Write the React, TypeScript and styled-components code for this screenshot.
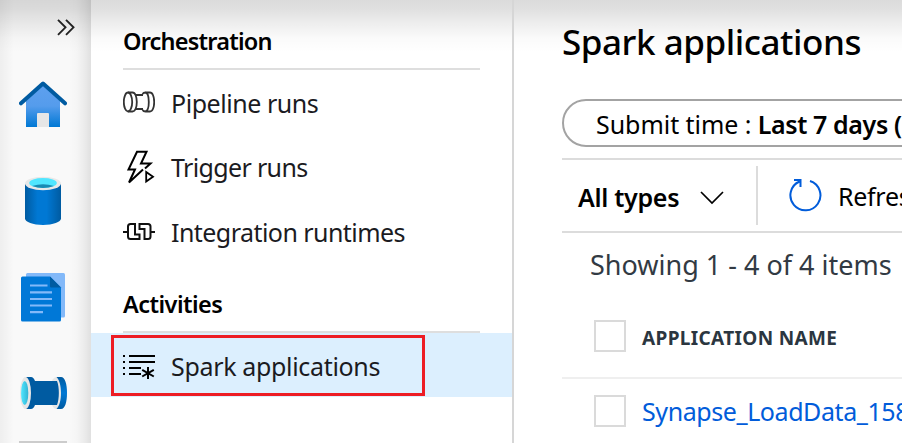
import React from 'react';
import styled, { createGlobalStyle } from 'styled-components';

const Global = createGlobalStyle`
  * { box-sizing: border-box; }
  html, body { margin: 0; overflow: hidden; background: #fff; }
  body { font-family: "Noto Sans", "Open Sans", sans-serif; color: #000; }
  svg { display: block; flex: none; }
`;

const topShade = 'linear-gradient(to bottom, rgba(0,0,0,.14) 0, rgba(0,0,0,.125) 8px, rgba(0,0,0,.065) 24px, rgba(0,0,0,.02) 38px, rgba(0,0,0,0) 52px)';

const Shell = styled.div`
  display: grid;
  grid-template-columns: 91px 423px 1fr;
  width: 902px;
  height: 443px;
  overflow: hidden;
`;

const Rail = styled.nav`
  display: flex;
  flex-direction: column;
  align-items: flex-start;
  padding: 18px 0 0 19px;
  background:
    linear-gradient(to left, rgba(0,0,0,.1) 0, rgba(0,0,0,.06) 6px, rgba(0,0,0,.015) 14px, rgba(0,0,0,0) 22px),
    linear-gradient(to right, rgba(0,0,0,.045) 0, rgba(0,0,0,0) 14px),
    ${topShade},
    #f9f9f9;
`;

const RailItem = styled.div<{ $gap: number; $indent?: number }>`
  margin-top: ${p => p.$gap}px;
  margin-left: ${p => p.$indent ?? 0}px;
`;

const RailRule = styled.div`
  width: 48px;
  height: 3px;
  margin-top: 32px;
  flex: none;
  background: #ccc;
`;

const Nav = styled.aside`
  border-right: 2px solid #d6d6d6;
  background: ${topShade}, #fff;
`;

const NavHeading = styled.h2<{ $height: number; $spacing: number }>`
  display: flex;
  align-items: flex-end;
  height: ${p => p.$height}px;
  margin: 0 32px 0 32px;
  padding-bottom: 10px;
  border-bottom: 2px solid #dedede;
  font-size: 23.500px;
  line-height: 34px;
  font-weight: 600;
  letter-spacing: ${p => p.$spacing}px;
`;

const NavRow = styled.div<{ $selected?: boolean; $height?: number }>`
  position: relative;
  display: flex;
  align-items: center;
  height: ${p => p.$height ?? 64}px;
  padding-left: 32px;
  background: ${p => (p.$selected ? '#dceffe' : 'transparent')};
`;

const NavLabel = styled.span<{ $spacing: number }>`
  margin-left: 16px;
  padding-top: 1px;
  font-size: 25px;
  line-height: 34px;
  color: #1b1b1f;
  white-space: nowrap;
  letter-spacing: ${p => p.$spacing}px;
`;

const Highlight = styled.div`
  position: absolute;
  left: 20px;
  top: 2px;
  width: 314px;
  height: 61px;
  border: 3px solid #ed1c24;
`;

const Main = styled.main`
  min-width: 0;
  overflow: hidden;
  padding-left: 48px;
  white-space: nowrap;
  background: ${topShade}, #fff;
`;

const Title = styled.h1`
  margin: 0;
  height: 99px;
  padding-top: 17px;
  font-size: 35px;
  line-height: 50px;
  font-weight: 500;
  letter-spacing: -0.45px;
`;

const Pill = styled.div`
  display: flex;
  align-items: center;
  width: 480px;
  height: 48px;
  padding: 1px 0 0 32px;
  border: 2px solid #a3a3a3;
  border-radius: 24px;
  font-size: 25px;
  line-height: 34px;
  white-space: pre;
`;

const PillName = styled.span`
  letter-spacing: -0.05px;
`;

const PillValue = styled.b`
  font-weight: 600;
  letter-spacing: -0.4px;
`;

const Toolbar = styled.div`
  display: flex;
  align-items: center;
  height: 75px;
  margin-top: 11px;
  border-top: 2px solid #dcdcdc;
  border-bottom: 2px solid #dcdcdc;
`;

const TypeFilter = styled.div`
  display: flex;
  flex: none;
  align-items: center;
  width: 196px;
  height: 59px;
  padding-left: 16px;
  border-right: 2px solid #dcdcdc;
  font-size: 25px;
  font-weight: 600;
  svg { margin: 5px 0 0 20px; }
`;

const FilterText = styled.span`
  width: 102px;
  padding-top: 2px;
  letter-spacing: -0.3px;
`;

const Refresh = styled.div`
  display: flex;
  flex: none;
  align-items: center;
  padding-left: 31px;
  font-size: 25px;
`;

const RefreshText = styled.span`
  padding: 1px 0 0 16px;
  letter-spacing: -0.3px;
`;

const Count = styled.div`
  height: 75px;
  padding: 13px 0 0 28px;
  font-size: 27px;
  line-height: 38px;
  color: #323a43;
`;

const TableRow = styled.div<{ $header?: boolean }>`
  display: flex;
  align-items: flex-start;
  height: ${p => (p.$header ? 71 : 73)}px;
  padding: ${p => (p.$header ? 12 : 16)}px 0 0 32px;
  border-bottom: 2px solid #efefef;
`;

const Checkbox = styled.div`
  flex: none;
  width: 32px;
  height: 32px;
  border: 2px solid #dadada;
  background: #fff;
`;

const ColumnName = styled.span`
  padding: 3px 0 0 16px;
  font-size: 19px;
  line-height: 30px;
  font-weight: 700;
  color: #2b3640;
  letter-spacing: 0.35px;
`;

const AppLink = styled.a`
  padding: 0 0 0 16px;
  font-size: 25px;
  line-height: 33px;
  color: #015cda;
  letter-spacing: -0.42px;
`;

const ExpandIcon = () => (
  <svg width="20" height="18" viewBox="0 0 20 18" fill="none" stroke="#222" strokeWidth="1.900">
    <path d="M2 1.800 9.500 9.300 2 16.800M10 1.800 17.500 9.300 10 16.800" />
  </svg>
);

const HomeIcon = () => (
  <svg width="48" height="48" viewBox="0 0 48 48">
    <defs>
      <linearGradient id="home" x1="0" y1="0" x2="0" y2="1">
        <stop offset="0" stopColor="#5ea0ef" />
        <stop offset=".5" stopColor="#559cec" />
        <stop offset="1" stopColor="#0078d4" />
      </linearGradient>
    </defs>
    <path d="M24 4 41 20V45.500q0 .5-.5.5h-33q-.5 0-.5-.5V20z" fill="url(#home)" />
    <path d="M18 46V33q0-1 1-1h10q1 0 1 1v13z" fill="#e6e6e6" />
    <path d="M2 22.300 24 2.600 46 22.300" fill="none" stroke="#005ba1" strokeWidth="4" strokeLinejoin="round" strokeLinecap="round" />
  </svg>
);

const DataIcon = () => (
  <svg width="36" height="50" viewBox="0 0 36 50">
    <defs>
      <linearGradient id="drum">
        <stop offset="0" stopColor="#005ba1" />
        <stop offset=".35" stopColor="#0078d4" />
        <stop offset=".6" stopColor="#0078d4" />
        <stop offset="1" stopColor="#005ba1" />
      </linearGradient>
    </defs>
    <path d="M0 8h36v34.500c0 3.500-8 6.500-18 6.500s-18-3-18-6.500z" fill="url(#drum)" />
    <ellipse cx="18" cy="7.500" rx="18" ry="6.700" fill="#e8e8e8" />
    <ellipse cx="18" cy="7" rx="13.800" ry="5" fill="#50e6ff" />
    <path d="M7 10q11-3.500 22 0-11 4.200-22 0z" fill="#198ab3" />
  </svg>
);

const DocsIcon = () => (
  <svg width="44" height="49" viewBox="0 0 44 49">
    <rect x="5" y="0" width="39" height="44.500" rx="1.500" fill="#83b9f9" />
    <path d="M1.500 3.500H29L40 14.500V47q0 1.500-1.500 1.500h-37Q0 48.500 0 47V5q0-1.500 1.500-1.500z" fill="#0078d7" />
    <path d="M29 3.500 40 14.500H30q-1 0-1-1z" fill="#005ba1" />
    <path d="M9 12.500h17.500M9 19.300h22M9 26h22M9 32.500h22M9 39.200h13" stroke="#83b9f9" strokeWidth="2.200" />
  </svg>
);

const PipeIcon = () => (
  <svg width="48" height="32" viewBox="0 0 48 32">
    <defs>
      <linearGradient id="flange" x1="0" y1="0" x2="0" y2="1">
        <stop offset="0" stopColor="#005ba1" />
        <stop offset=".5" stopColor="#0078d4" />
        <stop offset="1" stopColor="#005ba1" />
      </linearGradient>
      <linearGradient id="bore">
        <stop offset="0" stopColor="#50e6ff" />
        <stop offset="1" stopColor="#32b4d4" />
      </linearGradient>
    </defs>
    <path d="M33 4q1.500-4 5-4 4.500 3 4.500 16T38 32q-3.500 0-5-4z" fill="#e6e6e6" />
    <path d="M37.500 0H42c4 0 6 7 6 16s-2 16-6 16h-4.500c3-3 4.500-9 4.500-16s-1.500-13-4.500-16z" fill="url(#flange)" />
    <path d="M7 0h5q2.500 0 4 4h22c2.500 6 2.500 18 0 24H16q-1.500 4-4 4H7z" fill="#005ba1" />
    <ellipse cx="6.500" cy="16" rx="5.500" ry="16" fill="#e6e6e6" />
    <ellipse cx="5.700" cy="16" rx="3.600" ry="12" fill="url(#bore)" />
  </svg>
);

const PipelineRunsIcon = () => (
  <svg width="32" height="24" viewBox="0 0 32 24" fill="none" stroke="#333" strokeWidth="1.800">
    <ellipse cx="5" cy="12" rx="4.200" ry="9.500" />
    <path d="M5 2.500h4.500c2.600 0 4.300 4.200 4.300 9.500s-1.700 9.500-4.300 9.500H5M13 5h7M13 19h7" />
    <path d="M19.500 4q1-1.500 3-1.500H27c2.500 0 4.200 4.200 4.200 9.500S29.500 21.500 27 21.500h-4.500q-2 0-3-1.500M22 2.500c2.600 0 3.800 4.200 3.800 9.500s-1.200 9.500-3.800 9.500" />
  </svg>
);

const TriggerRunsIcon = () => (
  <svg width="32" height="36" viewBox="0 0 32 36" fill="none" stroke="#000" strokeWidth="2">
    <path d="M20 20.500 6 33.500 12 20.500H5.500L14 2.800h9.500L18 14.500h9.500L22 19.500" />
    <path d="M23.200 23v9.500l6.800-4.700z" strokeWidth="1.800" />
  </svg>
);

const IntegrationIcon = () => (
  <svg width="32" height="24" viewBox="0 -1 32 24" fill="none" stroke="#111" strokeWidth="2">
    <path d="M0 12h5M27 12h5M12 4H7.500Q5 4 5 6.500v10Q5 19 7.500 19H16.500V14.500H12zM16.500 3v6H21.500v10H25q2.500 0 2.500-2.500v-10Q27.500 4 25 4h-8.500" />
  </svg>
);

const SparkIcon = () => (
  <svg width="32" height="28" viewBox="0 0 32 28" stroke="#000" strokeWidth="2" fill="none">
    <path d="M0 5h2M6 5h26M0 11h2M6 11h26M0 17h2M6 17h12M0 23h2M6 23h12" />
    <path d="M25 16v12M19.200 18.800l11.600 6.700M30.800 18.800l-11.600 6.700" />
  </svg>
);

const ChevronIcon = () => (
  <svg width="24" height="14" viewBox="0 0 24 14" fill="none" stroke="#000" strokeWidth="1.700">
    <path d="M1 1 12 12 23 1" />
  </svg>
);

const RefreshIcon = () => (
  <svg width="33" height="36" viewBox="0 1 33 36" fill="none" stroke="#015cda" strokeWidth="2">
    <path d="M21 4A15 15 0 1 1 10.500 4.500M5 3h6.500v7" />
  </svg>
);

export default function App() {
  return (
    <>
      <Global />
      <Shell>
        <Rail>
          <RailItem $gap={0} $indent={37}><ExpandIcon /></RailItem>
          <RailItem $gap={45}><HomeIcon /></RailItem>
          <RailItem $gap={47} $indent={6}><DataIcon /></RailItem>
          <RailItem $gap={47} $indent={2}><DocsIcon /></RailItem>
          <RailItem $gap={55}><PipeIcon /></RailItem>
          <RailRule />
        </Rail>
        <Nav>
          <NavHeading $height={70} $spacing={-0.8}>Orchestration</NavHeading>
          <NavRow><PipelineRunsIcon /><NavLabel $spacing={-0.45}>Pipeline runs</NavLabel></NavRow>
          <NavRow $height={65}><TriggerRunsIcon /><NavLabel $spacing={-0.65}>Trigger runs</NavLabel></NavRow>
          <NavRow><IntegrationIcon /><NavLabel $spacing={-0.55}>Integration runtimes</NavLabel></NavRow>
          <NavHeading $height={70} $spacing={-0.55}>Activities</NavHeading>
          <NavRow $selected>
            <SparkIcon />
            <NavLabel $spacing={-0.33}>Spark applications</NavLabel>
            <Highlight />
          </NavRow>
        </Nav>
        <Main>
          <Title>Spark applications</Title>
          <Pill>
            <PillName>Submit time : </PillName>
            <PillValue>Last 7 days (</PillValue>
          </Pill>
          <Toolbar>
            <TypeFilter><FilterText>All types</FilterText><ChevronIcon /></TypeFilter>
            <Refresh><RefreshIcon /><RefreshText>Refresh</RefreshText></Refresh>
          </Toolbar>
          <Count>Showing 1 - 4 of 4 items</Count>
          <TableRow $header><Checkbox /><ColumnName>APPLICATION NAME</ColumnName></TableRow>
          <TableRow><Checkbox /><AppLink>Synapse_LoadData_158</AppLink></TableRow>
        </Main>
      </Shell>
    </>
  );
}
